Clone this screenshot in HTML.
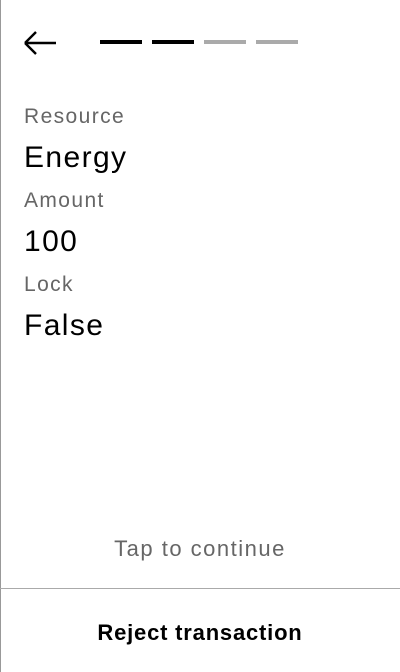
<!DOCTYPE html>
<html><head><style>
body{margin:0;width:400px;height:672px;background:#fff;position:relative;overflow:hidden;font-family:"Liberation Sans",sans-serif}
.lb{position:absolute;left:0;top:0;width:1px;height:672px;background:#999}
.bar{position:absolute;top:40px;height:4px;width:42px}
.l{position:absolute;left:24px;font-size:21px;color:#666;line-height:24px;letter-spacing:1.4px}
.v{position:absolute;left:24px;font-size:30px;color:#000;line-height:34px;letter-spacing:1.4px}
</style></head><body>
<div class="lb"></div>
<svg style="position:absolute;left:22px;top:28px" width="38" height="30" viewBox="0 0 38 30"><path d="M3 15H34M3 15L14 4M3 15L14 26" stroke="#000" stroke-width="2.4" fill="none"/></svg>
<div class="bar" style="left:100px;background:#000"></div>
<div class="bar" style="left:152px;background:#000"></div>
<div class="bar" style="left:204px;background:#aaa"></div>
<div class="bar" style="left:256px;background:#aaa"></div>
<div class="l" style="top:105px">Resource</div>
<div class="v" style="top:141px">Energy</div>
<div class="l" style="top:189px">Amount</div>
<div class="v" style="top:225px">100</div>
<div class="l" style="top:273px">Lock</div>
<div class="v" style="top:309px">False</div>
<div style="position:absolute;left:0;width:400px;top:536px;text-align:center;font-size:22px;color:#666;letter-spacing:1.5px">Tap to continue</div>
<div style="position:absolute;left:0;top:588px;width:400px;height:1px;background:#aaa"></div>
<div style="position:absolute;left:0;width:400px;top:620px;text-align:center;font-size:22px;font-weight:bold;color:#000;letter-spacing:0.8px">Reject transaction</div>
</body></html>
